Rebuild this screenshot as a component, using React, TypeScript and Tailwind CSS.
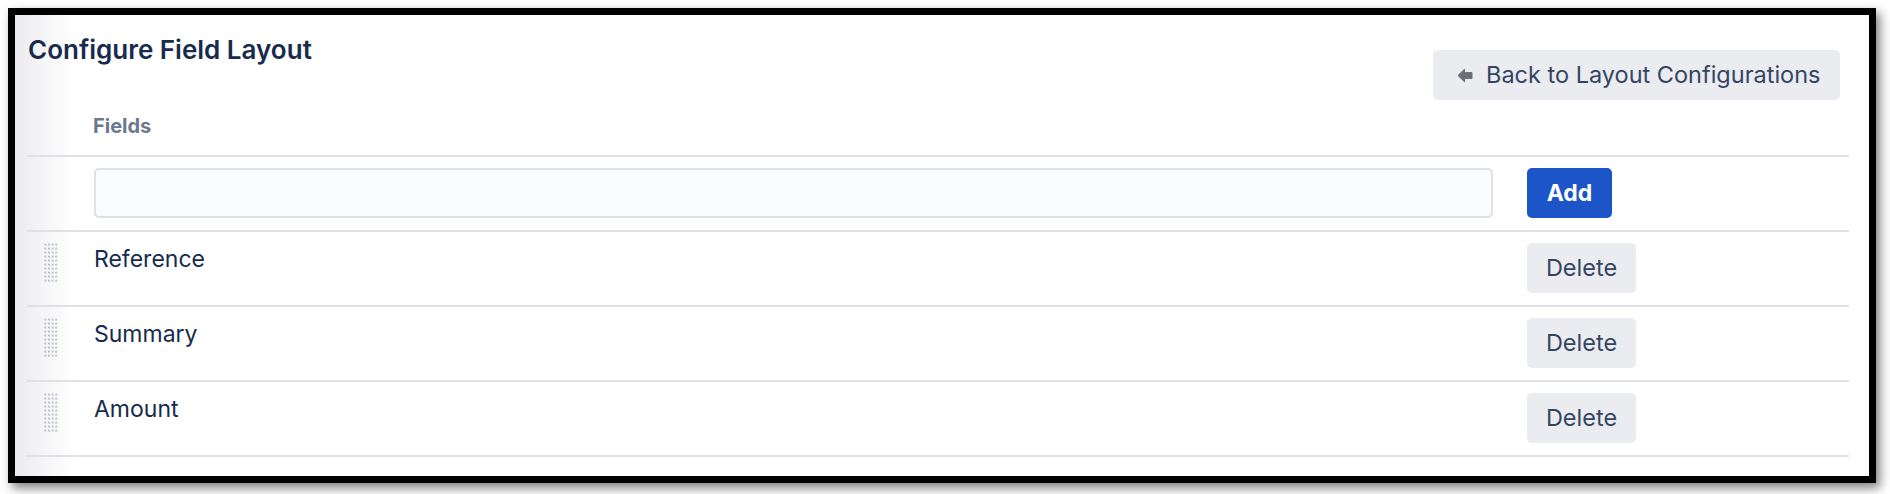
const FIELDS = ['Reference', 'Summary', 'Amount'];

function DragHandle() {
  const dots = [];
  for (let r = 0; r < 10; r++) {
    for (let c = 0; c < 4; c++) {
      dots.push(<rect key={`${r}-${c}`} x={c * 3.6 + 0.4} y={r * 4 + 0.6} width="2" height="2" fill="#bfc4cc" />);
    }
  }
  return (
    <svg width="14" height="40" viewBox="0 0 14 40" className="block">
      {dots}
    </svg>
  );
}

function BackArrow() {
  return (
    <svg width="16" height="15" viewBox="0 0 16 15" className="block">
      <path d="M1 7.5 L7.5 1.2 L7.5 4.6 L15 4.6 L15 10.4 L7.5 10.4 L7.5 13.8 Z" fill="#6b6e75" stroke="#6b6e75" strokeWidth="1" strokeLinejoin="round" />
    </svg>
  );
}

export default function App() {
  return (
    <div className="w-[1890px] h-[494px] bg-white font-['Inter','Liberation_Sans',sans-serif] overflow-hidden">
      <div className="ml-[8px] mt-[8px] w-[1868px] h-[475px] border-[7px] border-black shadow-[4px_5px_10px_rgba(0,0,0,0.5)]">
        <div className="h-full pl-[12px] pr-[20px] bg-[linear-gradient(to_right,#ececef,#ffffff_60px)]">
          <div className="flex justify-between items-start pt-[18px]">
            <h1 className="ml-[1px] mt-[1px] text-[26px] leading-[32px] font-semibold text-[#172b4d]">Configure Field Layout</h1>
            <button className="mt-[17px] mr-[9px] w-[407px] h-[50px] rounded-[5px] bg-[#ebecf0] flex items-center pl-[24px] gap-[13px] text-[23.5px] text-[#344563]">
              <BackArrow />
              <span>Back to Layout Configurations</span>
            </button>
          </div>

          <div className="pt-[14px] pb-[17px] pl-[66px] border-b-2 border-[#dfe1e6]">
            <span className="block text-[20px] leading-[24px] font-bold text-[#6b778c]">Fields</span>
          </div>

          <div className="flex pt-[11px] pb-[12px] border-b-2 border-[#dfe1e6]">
            <div className="w-[67px]" />
            <div className="flex-1 pr-[34px]">
              <input
                type="text"
                className="w-full h-[50px] rounded-[5px] border-2 border-[#dfe1e6] bg-[#fafbfc] px-3 text-[23px] text-[#172b4d] focus:outline-none"
              />
            </div>
            <div className="w-[322px]">
              <button className="w-[85px] h-[50px] rounded-[5px] bg-[#1c55c8] text-white text-[23px] font-bold">Add</button>
            </div>
          </div>

          {FIELDS.map((name) => (
            <div key={name} className="flex items-start pt-[11px] pb-[12px] border-b-2 border-[#dfe1e6]">
              <div className="w-[67px] pl-[17px]">
                <DragHandle />
              </div>
              <div className="flex-1 pt-[2px] text-[23px] leading-[29px] text-[#172b4d]">{name}</div>
              <div className="w-[322px]">
                <button className="w-[109px] h-[50px] rounded-[5px] bg-[#ebecf0] text-[23.5px] text-[#344563]">Delete</button>
              </div>
            </div>
          ))}
        </div>
      </div>
    </div>
  );
}
